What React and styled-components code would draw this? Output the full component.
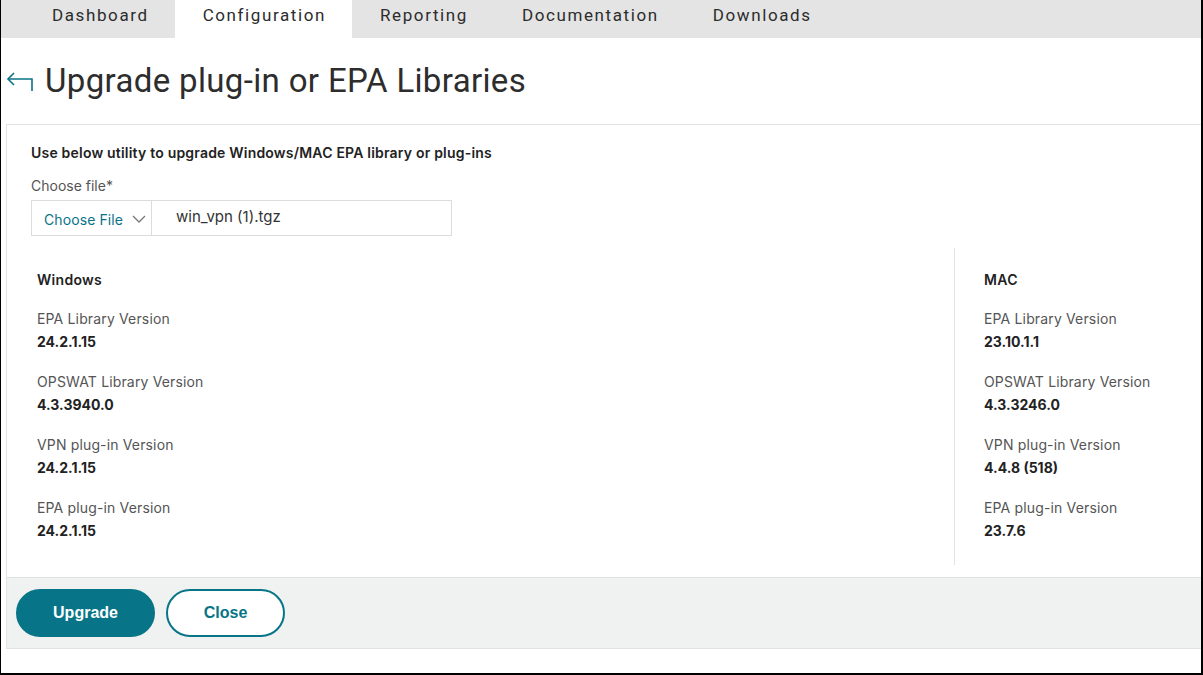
import styled, { createGlobalStyle } from 'styled-components';

const GlobalStyle = createGlobalStyle`
  * { box-sizing: border-box; }
  body {
    margin: 0;
    background: #fff;
    font-family: Inter, "Noto Sans", sans-serif;
  }
`;

const Frame = styled.div`
  width: 1203px;
  height: 675px;
  display: flex;
  flex-direction: column;
  border-left: 1px solid #000;
  border-right: 2px solid #000;
  border-bottom: 2px solid #000;
  overflow: hidden;
`;

const TabBar = styled.nav`
  display: flex;
  height: 38px;
  padding-left: 23px;
  background: #e4e4e4;
  flex-shrink: 0;
`;

const Tab = styled.div`
  padding: 0 26px 0 28px;
  height: 38px;
  line-height: 31px;
  font-family: Roboto, sans-serif;
  font-size: 17px;
  letter-spacing: 1.6px;
  color: #2c2c2c;
  background: ${(props) => (props.active ? '#fff' : 'transparent')};
`;

const Header = styled.header`
  display: flex;
  align-items: center;
  gap: 11px;
  height: 86px;
  padding: 0 0 1px 5px;
  flex-shrink: 0;
`;

const BackArrow = styled.svg`
  width: 28px;
  height: 20px;
  margin-top: 2px;
`;

const Title = styled.h1`
  margin: 0;
  font-family: Roboto, sans-serif;
  font-weight: 400;
  font-size: 33px;
  letter-spacing: 0.35px;
  color: #2d2d2d;
`;

const Panel = styled.main`
  margin-left: 5px;
  border-top: 1px solid #e3e3e3;
  border-left: 1px solid #e3e3e3;
  display: flex;
  flex-direction: column;
`;

const Intro = styled.section`
  padding: 19px 24px 0;
`;

const IntroText = styled.p`
  margin: 0 0 15px;
  font-size: 14px;
  font-weight: 600;
  line-height: 18px;
  letter-spacing: 0.2px;
  color: #222;
`;

const FieldLabel = styled.label`
  display: block;
  font-size: 14px;
  line-height: 18px;
  color: #555;
  margin-bottom: 5px;
`;

const FileInput = styled.div`
  display: flex;
  width: 421px;
  height: 36px;
  border: 1px solid #dcdcdc;
`;

const ChooseButton = styled.div`
  display: flex;
  align-items: center;
  gap: 9px;
  width: 120px;
  padding: 2px 0 0 12px;
  border-right: 1px solid #dcdcdc;
  font-size: 14px;
  letter-spacing: 0.1px;
  color: #0a7387;
`;

const FileName = styled.div`
  display: flex;
  align-items: center;
  padding: 0 0 3px 24px;
  font-size: 15px;
  color: #333;
`;

const Columns = styled.section`
  display: flex;
  margin-top: 12px;
  height: 317px;
`;

const Column = styled.div`
  flex: ${(props) => (props.wide ? '0 0 947px' : '1')};
  padding: ${(props) => (props.wide ? '23px 30px' : '23px 29px')};
  border-left: ${(props) => (props.wide ? 'none' : '1px solid #e3e3e3')};
`;

const ColumnTitle = styled.h3`
  margin: 0 0 21px;
  font-size: 14px;
  font-weight: 600;
  line-height: 18px;
  letter-spacing: 0.3px;
  color: #222;
`;

const Item = styled.div`
  margin-bottom: 22px;
`;

const ItemLabel = styled.div`
  font-size: 14px;
  line-height: 18px;
  letter-spacing: 0.15px;
  color: #555;
  margin-bottom: 5px;
`;

const ItemValue = styled.div`
  font-size: 14px;
  font-weight: 700;
  line-height: 18px;
  color: #222;
`;

const Footer = styled.footer`
  display: flex;
  gap: 11px;
  margin-top: 12px;
  padding: 11px 9px;
  height: 72px;
  background: #f0f1f1;
  border-top: 1px solid #e1e3e3;
  border-bottom: 1px solid #e1e3e3;
`;

const Button = styled.button`
  width: ${(props) => (props.primary ? '139px' : '119px')};
  height: 48px;
  border-radius: 24px;
  border: 2px solid #077587;
  background: ${(props) => (props.primary ? '#077587' : '#fff')};
  color: ${(props) => (props.primary ? '#fff' : '#077587')};
  font-family: "Liberation Sans", Arial, sans-serif;
  font-weight: 700;
  font-size: 16px;
  cursor: pointer;
`;

const tabs = ['Dashboard', 'Configuration', 'Reporting', 'Documentation', 'Downloads'];

const windows = [
  ['EPA Library Version', '24.2.1.15'],
  ['OPSWAT Library Version', '4.3.3940.0'],
  ['VPN plug-in Version', '24.2.1.15'],
  ['EPA plug-in Version', '24.2.1.15'],
];

const mac = [
  ['EPA Library Version', '23.10.1.1'],
  ['OPSWAT Library Version', '4.3.3246.0'],
  ['VPN plug-in Version', '4.4.8 (518)'],
  ['EPA plug-in Version', '23.7.6'],
];

function VersionList({ title, items, wide }) {
  return (
    <Column wide={wide}>
      <ColumnTitle>{title}</ColumnTitle>
      {items.map(([label, value]) => (
        <Item key={label}>
          <ItemLabel>{label}</ItemLabel>
          <ItemValue>{value}</ItemValue>
        </Item>
      ))}
    </Column>
  );
}

export default function App() {
  return (
    <>
      <GlobalStyle />
      <Frame>
        <TabBar>
          {tabs.map((t) => (
            <Tab key={t} active={t === 'Configuration'}>
              {t}
            </Tab>
          ))}
        </TabBar>

        <Header>
          <BackArrow viewBox="0 0 28 20" fill="none" stroke="#0a7387" strokeWidth="1.6">
            <path d="M2 7 H26 V19" />
            <path d="M8 1 L2 7 L8 13" />
          </BackArrow>
          <Title>Upgrade plug-in or EPA Libraries</Title>
        </Header>

        <Panel>
          <Intro>
            <IntroText>Use below utility to upgrade Windows/MAC EPA library or plug-ins</IntroText>
            <FieldLabel>Choose file*</FieldLabel>
            <FileInput>
              <ChooseButton>
                Choose File
                <svg width="14" height="8" viewBox="0 0 14 8" fill="none" stroke="#777" strokeWidth="1.3">
                  <path d="M1 1 L7 7 L13 1" />
                </svg>
              </ChooseButton>
              <FileName>win_vpn (1).tgz</FileName>
            </FileInput>
          </Intro>

          <Columns>
            <VersionList title="Windows" items={windows} wide />
            <VersionList title="MAC" items={mac} />
          </Columns>

          <Footer>
            <Button primary>Upgrade</Button>
            <Button>Close</Button>
          </Footer>
        </Panel>
      </Frame>
    </>
  );
}
